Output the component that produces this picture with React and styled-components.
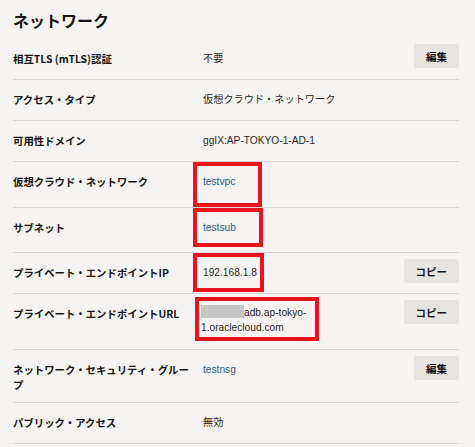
import React from 'react'
import styled, { createGlobalStyle } from 'styled-components'

const GlobalStyle = createGlobalStyle`
  html, body {
    margin: 0;
    background: #f5f4f2;
  }
  body {
    font-family: "Liberation Sans", "Noto Sans CJK JP", sans-serif;
    color: #161513;
  }
`

const Panel = styled.section`
  padding: 0 16px 0 13px;
`

const Title = styled.h2`
  margin: 0 0 9px;
  padding-top: 10px;
  font-size: 16px;
  line-height: 20px;
  font-weight: 700;
  font-family: "Noto Sans CJK JP", sans-serif;
`

const Row = styled.div`
  display: grid;
  grid-template-columns: 180px 1fr auto;
  align-items: start;
  min-height: ${(p) => p.h || 41}px;
  box-sizing: border-box;
  border-bottom: 1px solid #d9d7d3;
`

/* labels may run slightly into the value gutter before wrapping */
const Label = styled.div`
  margin-right: -4px;
  padding: 12px 0 10px;
  font-size: 10.4px;
  line-height: 15px;
  font-weight: 700;
  font-family: "Noto Sans CJK JP", sans-serif;
`

const Value = styled.div`
  padding: 12px 0 10px 10px;
  font-size: 10.2px;
  line-height: 15px;
  white-space: nowrap;
  color: ${(p) => (p.link ? '#2a5f80' : '#2b2825')};
`

/* red outline drawn round a value */
const Marked = styled.div`
  box-sizing: border-box;
  width: ${(p) => p.w}px;
  margin-left: ${(p) => p.ml || 0}px;
  margin-top: ${(p) => p.mt || 0}px;
  padding: ${(p) => p.pad};
  border: 4px solid #e8131b;
  font-size: 10.2px;
  line-height: 15px;
  white-space: ${(p) => (p.wrap ? 'normal' : 'nowrap')};
  color: ${(p) => (p.link ? '#2a5f80' : '#2b2825')};
`

const Hidden = styled.span`
  display: inline-block;
  width: 43px;
  height: 13px;
  vertical-align: -2px;
  background: #c6c6c6;
`

const Button = styled.button`
  margin-top: ${(p) => p.mt || 6}px;
  height: 24px;
  padding: 0 12px;
  border: none;
  border-radius: 3px;
  background: #e6e4e1;
  color: #161513;
  font-family: "Noto Sans CJK JP", sans-serif;
  font-size: 10.5px;
  font-weight: 700;
`

export default function App() {
  return (
    <>
      <GlobalStyle />
      <Panel>
        <Title>ネットワーク</Title>

        <Row>
          <Label>相互TLS (mTLS)認証</Label>
          <Value>不要</Value>
          <Button mt={5}>編集</Button>
        </Row>

        <Row>
          <Label>アクセス・タイプ</Label>
          <Value>仮想クラウド・ネットワーク</Value>
        </Row>

        <Row>
          <Label>可用性ドメイン</Label>
          <Value>ggIX:AP-TOKYO-1-AD-1</Value>
        </Row>

        <Row h={46}>
          <Label>仮想クラウド・ネットワーク</Label>
          <div>
            <Marked link w={69} pad="8px 6px 14px">testvpc</Marked>
          </div>
        </Row>

        <Row h={45}>
          <Label>サブネット</Label>
          <div>
            <Marked link w={70} pad="8px 6px 8px">testsub</Marked>
          </div>
        </Row>

        <Row>
          <Label>プライベート・エンドポイントIP</Label>
          <div>
            <Marked w={71} pad="8px 6px 8px">192.168.1.8</Marked>
          </div>
          <Button>コピー</Button>
        </Row>

        <Row h={56}>
          <Label>プライベート・エンドポイントURL</Label>
          <div>
            <Marked wrap w={124} ml={2} mt={3} pad="4px 4px 2px 2px">
              <Hidden />adb.ap-tokyo-1.oraclecloud.com
            </Marked>
          </div>
          <Button>コピー</Button>
        </Row>

        <Row>
          <Label>ネットワーク・セキュリティ・グルー<wbr />プ</Label>
          <Value link>testnsg</Value>
          <Button>編集</Button>
        </Row>

        <Row>
          <Label>パブリック・アクセス</Label>
          <Value>無効</Value>
        </Row>
      </Panel>
    </>
  )
}
